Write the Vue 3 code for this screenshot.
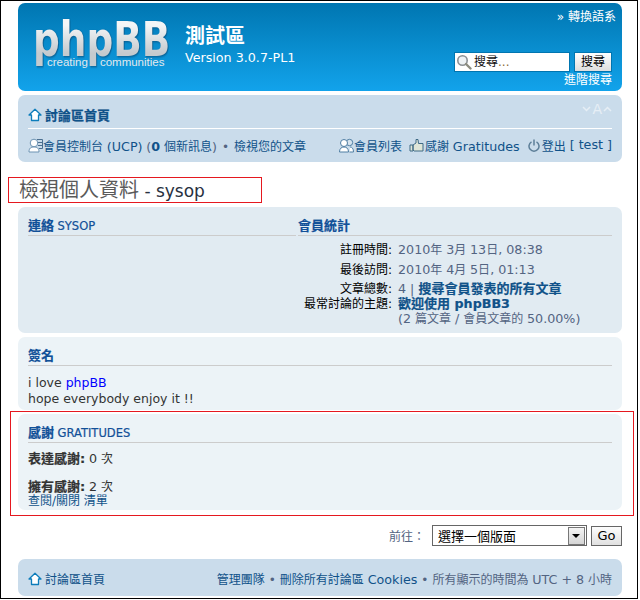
<script setup>
</script>

<template>
  <div class="shot">
    <header class="banner">
      <div class="logo" aria-label="phpBB">
        <div class="logo-word">phpBB</div>
        <div class="logo-tag"><span>creating</span><span>communities</span></div>
      </div>
      <div class="site">
        <div class="site-name">測試區</div>
        <div class="site-ver">Version 3.0.7-PL1</div>
      </div>
      <div class="banner-right">
        <div class="lang"><span class="chev">»</span> 轉換語系</div>
        <div class="search">
          <div class="search-input">
            <svg width="16" height="16" viewBox="0 0 16 16">
              <circle cx="6.500" cy="6.500" r="4.700" fill="#eef2f5" stroke="#8a8f94" stroke-width="1.600" />
              <path d="M10 10l4.500 4.500" stroke="#8c8c80" stroke-width="2.400" stroke-linecap="round" />
            </svg>
            <span>搜尋<i>...</i></span>
          </div>
          <div class="search-btn">搜尋</div>
        </div>
        <div class="adv">進階搜尋</div>
      </div>
    </header>

    <nav class="navbar top">
      <div class="nav-row first">
        <span class="crumb">
          <svg class="home" width="14" height="14" viewBox="0 0 14 14">
            <path d="M7 1.200 13 7H10.500V12.500H3.500V7H1Z" fill="#fff" stroke="#0d7dbb" stroke-width="1.300" stroke-linejoin="round" />
          </svg>
          <b>討論區首頁</b>
        </span>
        <span class="fontsize">
          <svg width="9" height="6" viewBox="0 0 9 6"><path d="M1 1l3.500 3.500L8 1" fill="none" stroke="#e6eef5" stroke-width="1.500" /></svg>
          <span>A</span>
          <svg width="9" height="6" viewBox="0 0 9 6"><path d="M1 5l3.500-3.500L8 5" fill="none" stroke="#e6eef5" stroke-width="1.500" /></svg>
        </span>
      </div>
      <div class="nav-row second">
        <span class="group">
          <svg class="ic" width="15" height="15" viewBox="0 0 15 15">
            <path d="M9 1.500h5.500v9H11" fill="#cadceb" stroke="#4b6f90" stroke-width="1" />
            <path d="M10 4.500h4M10 7.500h4" stroke="#4b6f90" stroke-width="1" />
            <circle cx="6" cy="5" r="3.800" fill="#fff" stroke="#6c93b3" stroke-width="1" />
            <path d="M1 14C1 10 3 9 6 9s5 1 5 5Z" fill="#fff" stroke="#6c93b3" stroke-width="1" />
          </svg>
          <span class="txt"><a>會員控制台 <span class="l">(UCP)</span></a> <span class="gray l">(</span><b class="zero l">0</b> <a>個新訊息</a><span class="gray l">)</span><span class="dot">•</span><a>檢視您的文章</a></span>
        </span>
        <span class="group">
          <svg class="ic" width="15" height="15" viewBox="0 0 15 15">
            <circle cx="10.500" cy="4.500" r="3.200" fill="#d5e3ee" stroke="#4f7ea3" />
            <circle cx="5" cy="5" r="3.500" fill="#fff" stroke="#4f7ea3" />
            <path d="M.5 14C.5 10.500 2.500 9 5 9s4.500 1.500 4.500 5ZM10.500 14h4C14.500 10.500 13 9 11 9" fill="#fff" stroke="#4f7ea3" />
          </svg>
          <a>會員列表</a>
          <svg class="ic thumb" width="15" height="15" viewBox="0 0 15 15">
            <path d="M1 7h3v6H1ZM4 7l3-2V1.500h2l.5 4H14v7.500H5L4 12Z" fill="#dfe6d8" stroke="#3f6a85" stroke-linejoin="round" />
          </svg>
          <a>感謝 <span class="l">Gratitudes</span></a>
          <svg class="ic power" width="12" height="13" viewBox="0 0 12 13">
            <path d="M3.500 2.800a5 5 0 1 0 5 0" fill="none" stroke="#5d7f98" stroke-width="1.500" />
            <path d="M6 .5v6" stroke="#5d7f98" stroke-width="1.500" />
          </svg>
          <a>登出</a>
          <a class="user l">[ test ]</a>
        </span>
      </div>
    </nav>

    <h2 class="title"><span class="t-cjk">檢視個人資料</span> - sysop</h2>

    <section class="panel p1">
      <div class="cols">
        <div class="col">
          <h3>連絡 <span>SYSOP</span></h3>
        </div>
        <div class="col col-r">
          <h3>會員統計</h3>
          <dl>
            <div class="line wide"><dt>註冊時間:</dt><dd><span class="l">2010</span>年 <span class="l">3</span>月 <span class="l">13</span>日<span class="l">, 08:38</span></dd></div>
            <div class="line"><dt>最後訪問:</dt><dd><span class="l">2010</span>年 <span class="l">4</span>月 <span class="l">5</span>日<span class="l">, 01:13</span></dd></div>
            <div class="line tight"><dt>文章總數:</dt><dd><span class="l">4 | </span><a class="strong">搜尋會員發表的所有文章</a></dd></div>
            <div class="line"><dt>最常討論的主題:</dt><dd><a class="strong">歡迎使用 <span class="l">phpBB3</span></a><br /><span class="l">(2 </span>篇文章 <span class="l">/ </span>會員文章的 <span class="l">50.00%)</span></dd></div>
          </dl>
        </div>
      </div>
    </section>

    <section class="panel p2">
      <h3>簽名</h3>
      <div class="sig">i love <span class="pure">phpBB</span><br />hope everybody enjoy it !!</div>
    </section>

    <section class="panel p3">
      <h3>感謝 <span>GRATITUDES</span></h3>
      <div class="thanks"><b>表達感謝:</b> <span class="l">0</span> 次</div>
      <div class="thanks gap"><b>擁有感謝:</b> <span class="l">2</span> 次</div>
      <a class="toggle">查閱/關閉 清單</a>
    </section>

    <div class="jump">
      <span class="jump-label">前往：</span>
      <div class="select">
        <span>選擇一個版面</span>
        <span class="arrow"></span>
      </div>
      <div class="go">Go</div>
    </div>

    <footer class="navbar bottom">
      <span class="crumb">
        <svg class="home" width="14" height="14" viewBox="0 0 14 14">
          <path d="M7 1.200 13 7H10.500V12.500H3.500V7H1Z" fill="#fff" stroke="#0d7dbb" stroke-width="1.300" stroke-linejoin="round" />
        </svg>
        <a>討論區首頁</a>
      </span>
      <span class="foot-right">
        <a>管理團隊</a><span class="dot">•</span><a>刪除所有討論區 <span class="l">Cookies</span></a><span class="dot">•</span><span class="tz">所有顯示的時間為 <span class="l">UTC + 8</span> 小時</span>
      </span>
    </footer>

    <div class="mark mark-title"></div>
    <div class="mark mark-thanks"></div>
  </div>
</template>

<style>
html, body { margin: 0; padding: 0; background: #fff; }
</style>

<style scoped>
.shot {
  position: relative;
  box-sizing: border-box;
  width: 638px;
  height: 599px;
  overflow: hidden;
  border: 1px solid #000;
  padding: 2px 15px 0 17px;
  background: #fff;
  font-family: "DejaVu Sans", "Noto Sans CJK TC", sans-serif;
  font-size: 12px;
  color: #536482;
}
a { color: #105289; }
.l { font-size: 12.7px; line-height: 1; }
.banner {
  display: flex;
  height: 88px;
  border-radius: 7px;
  background: linear-gradient(#0076b1, #12a3eb);
  color: #fff;
}
.logo { flex: none; width: 134px; margin: 8px 0 0 15px; }
.logo-word {
  font-family: "DejaVu Sans", sans-serif;
  font-weight: 700;
  font-size: 48px;
  line-height: 56px;
  height: 56px;
  width: 180px;
  background: linear-gradient(#f4f6f7 25%, #c5cace 75%);
  -webkit-background-clip: text;
  background-clip: text;
  color: transparent;
  transform: scaleX(.78);
  transform-origin: left top;
  filter: drop-shadow(1px 1px 1px #0a5a8c);
}
.logo-tag {
  font-family: "Liberation Sans", sans-serif;
  font-size: 11.500px;
  display: flex;
  gap: 12px;
  margin: -11px 0 0 14px;
  line-height: 12px;
  color: #e3e9ed;
}
.site { margin: 21px 0 0 18px; }
.site-name { font-size: 20px; font-weight: 700; line-height: 24px; }
.site-ver { font-size: 12.700px; line-height: 16px; margin-top: 2px; }
.banner-right { margin-left: auto; width: 170px; padding-right: 10px; box-sizing: border-box; text-align: right; }
.lang { margin: 6px -4px 0 0; line-height: 17px; }
.chev { font-size: 12px; }
.search { display: flex; justify-content: flex-end; gap: 4px; margin-top: 26px; }
.search-input {
  width: 113px; height: 18px; background: #fff; border: 1px solid #0075b0;
  color: #111; display: flex; align-items: center; gap: 2px; text-align: left; line-height: 18px; padding-left: 1px;
}
.search-input i { font-style: normal; color: #8a6a3a; }
.search-btn {
  width: 36px; height: 18px; background: linear-gradient(#fff, #ddd); border: 1px solid #0075b0;
  color: #000; text-align: center; line-height: 18px;
}
.adv { line-height: 15px; margin-top: 1px; }

.navbar { background: #cadceb; border-radius: 7px; }
.top { margin-top: 4px; height: 67px; padding: 0 10px; box-sizing: border-box; }
.nav-row { display: flex; justify-content: space-between; align-items: center; }
.first { height: 34px; border-bottom: 1px solid #fff; box-sizing: border-box; padding-top: 6px; }
.second { height: 33px; white-space: nowrap; }
.crumb { display: inline-flex; align-items: center; gap: 3px; color: #105289; }
.crumb b { color: #105289; font-size: 13px; -webkit-text-stroke: .25px #105289; }
.home { flex: none; }
.fontsize { display: inline-flex; align-items: center; gap: 1px; color: #e6eef5; font-size: 14px; margin-top: -12px; line-height: 14px; }
.group { display: inline-flex; align-items: center; white-space: pre; }
.txt { white-space: pre-wrap; }
.txt .dot { margin: 0 5px; }
.gray { color: #536482; }
.zero { color: #105289; }
.dot { color: #536482; margin: 0 4px; }
.ic { flex: none; }
.thumb { margin-left: 7px; margin-right: 1px; }
.power { margin-left: 8px; margin-right: 2px; }
.user { margin-left: 4px; }

.title {
  margin: 15px 0 0 1px;
  font-weight: 400;
  font-size: 17px;
  line-height: 26px;
  height: 26px;
  color: #28313f;
}
.t-cjk { color: #5a5a5a; font-size: 20px; }

.panel { border-radius: 7px; padding: 0 10px; box-sizing: border-box; }
h3 {
  margin: 0;
  font-size: 13px;
  font-weight: 700;
  color: #115098;
  border-bottom: 1px solid #ccc;
  line-height: 19px;
  height: 20px;
  box-sizing: border-box;
  -webkit-text-stroke: .2px #115098;
}
h3 span { font-size: 11.500px; -webkit-text-stroke: .2px #115098; font-weight: 400; margin-left: -1px; }
.p1 { background: #e1ebf2; height: 126px; margin-top: 4px; padding-top: 9px; }
.cols { display: flex; gap: 2px; }
.col { width: 268px; flex: none; }
.col-r { flex: 1; }
dl { margin: 7px 0 0 -2px; }
.line { display: flex; line-height: 15px; margin-bottom: 4px; }
.wide { margin-bottom: 5px; }
.tight { margin-bottom: 0; }
dt { width: 96px; flex: none; text-align: right; color: #000; }
dd { margin: 0; color: #536482; padding-left: 6px; }
.strong { font-weight: 700; font-size: 13px; line-height: 1; color: #105289; -webkit-text-stroke: .2px #105289; }
.p2 { background: #ecf3f7; height: 73px; margin-top: 4px; padding-top: 9px; }
.sig { margin-top: 9px; line-height: 16px; color: #333; font-size: 12.500px; }
.pure { color: #0000ff; }
.p3 { background: #ecf3f7; height: 96px; margin-top: 4px; padding-top: 9px; }
.thanks { color: #333; line-height: 15px; margin-top: 9px; }
.thanks b { font-size: 13px; line-height: 1; -webkit-text-stroke: .2px #333; }
.thanks.gap { margin-top: 13px; }
.toggle { display: block; line-height: 14px; margin-top: -1px; }

.jump { display: flex; justify-content: flex-end; align-items: center; margin-top: 15px; height: 21px; }
.jump-label { color: #536482; margin-right: 7px; }
.select {
  width: 148px; height: 19px; border: 1px solid #666; background: #fff; color: #000; font-size: 13px;
  display: flex; align-items: center; justify-content: space-between; padding-left: 5px;
}
.arrow {
  position: relative; width: 15px; height: 16px; margin-right: 1px; border: 1px solid #777;
  background: linear-gradient(#f4f4f4, #d5d5d5);
}
.arrow::after {
  content: ""; position: absolute; left: 3px; top: 6px; border: 4px solid transparent; border-top: 4px solid #000; border-bottom: 0;
}
.go {
  width: 29px; height: 18px; margin-left: 4px; border: 1px solid #666; background: linear-gradient(#fdfdfd, #e0e0e0); color: #000; text-align: center; line-height: 18px; font-size: 13px;
}
.bottom { display: flex; align-items: center; justify-content: space-between; height: 37px; margin-top: 13px; padding: 2px 10px 0; box-sizing: border-box; white-space: nowrap; }
.tz { color: #536482; }

.mark { position: absolute; border: 1px solid #e5181f; pointer-events: none; box-sizing: border-box; }
.mark-title { left: 7px; top: 176px; width: 254px; height: 26px; }
.mark-thanks { left: 9px; top: 410px; width: 624px; height: 105px; }
</style>
